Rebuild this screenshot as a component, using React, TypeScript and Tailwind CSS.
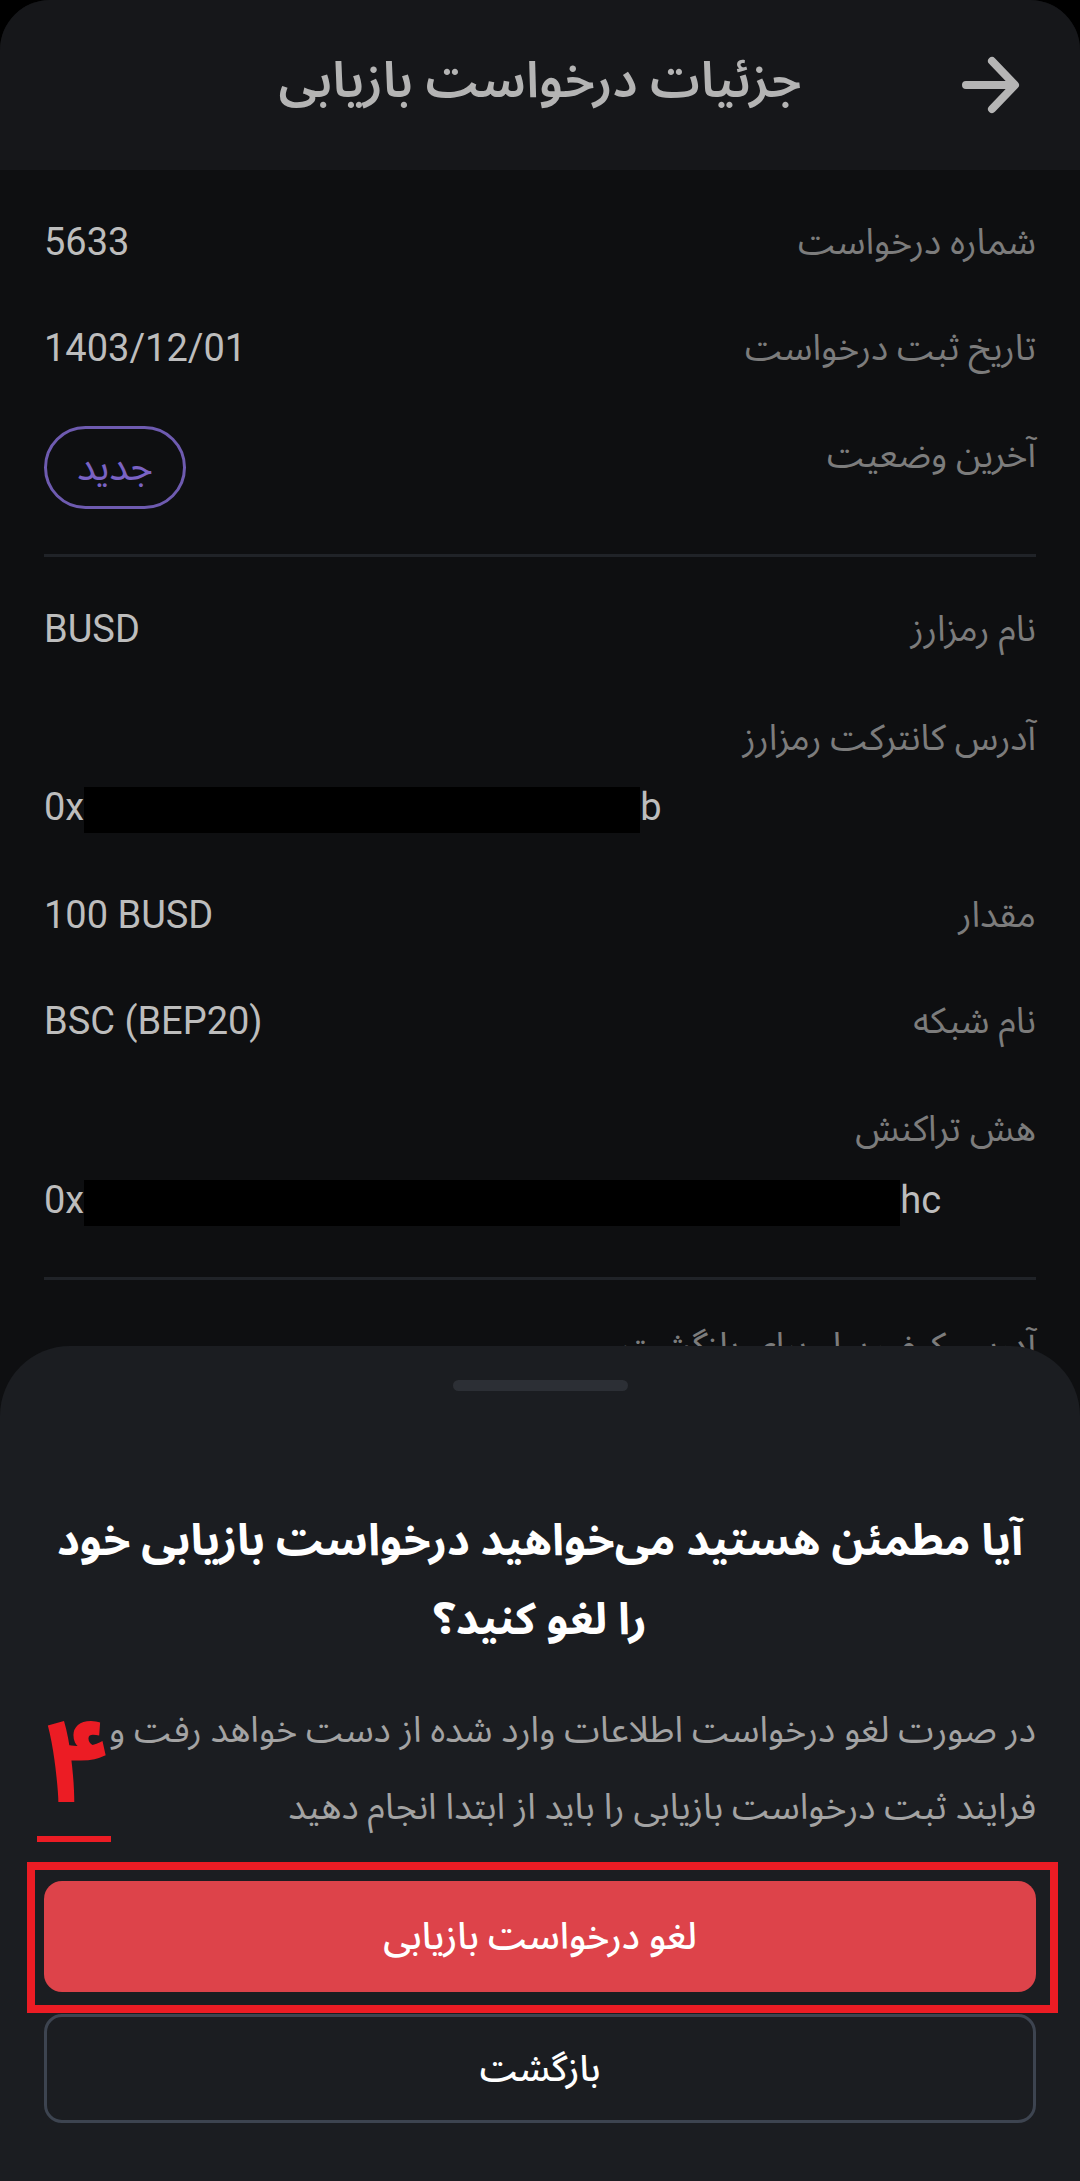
type Row = {
  label: string;
  value: string;
};

const font = "font-['Roboto','Noto_Sans_Arabic','DejaVu_Sans',sans-serif]";

function InfoRow({ label, value }: Row) {
  return (
    <div className="flex h-[50px] items-center justify-between">
      <span className="text-[36px] leading-[50px] text-[#7c7c7c]">{label}</span>
      <span dir="ltr" className="text-[38px] leading-[50px] text-[#bdbdbd]">
        {value}
      </span>
    </div>
  );
}

function HiddenValue({ width, tail }: { width: number; tail: string }) {
  return (
    <div dir="ltr" className="flex h-[50px] items-center text-[38px] leading-[50px] text-[#bdbdbd]">
      <span>0x</span>
      <span className="mt-[6px] h-[46px] bg-black" style={{ width }} />
      <span>{tail}</span>
    </div>
  );
}

function BackArrow() {
  return (
    <svg width="60" height="60" viewBox="0 0 60 60" fill="none">
      <path
        d="M6 30H54M32 6L55 30L32 54"
        stroke="#b5b5b5"
        strokeWidth="8"
        strokeLinecap="round"
        strokeLinejoin="round"
      />
    </svg>
  );
}

export default function App() {
  return (
    <div dir="rtl" className={`relative h-[2181px] w-[1080px] overflow-hidden bg-black ${font}`}>
      <div className="h-full rounded-t-[50px] bg-[#0e0f11]">
        {/* header */}
        <div className="grid h-[170px] grid-cols-[120px_1fr_120px] items-center rounded-t-[50px] bg-[#16171a]">
          <div className="flex justify-start pr-[60px]">
            <BackArrow />
          </div>
          <h1 className="mb-[10px] text-center text-[50px] font-semibold text-[#b4b4b4]">جزئیات درخواست بازیابی</h1>
          <div />
        </div>

        {/* details */}
        <div className="px-[44px] pt-[47px]">
          <InfoRow label="شماره درخواست" value="5633" />
          <div className="mt-[56px]">
            <InfoRow label="تاریخ ثبت درخواست" value="1403/12/01" />
          </div>
          <div className="mt-[53px] flex items-start justify-between">
            <span className="mt-[4px] text-[36px] leading-[50px] text-[#7c7c7c]">آخرین وضعیت</span>
            <span className="flex h-[83px] w-[142px] items-center justify-center rounded-full border-[3px] border-[#6e5bb0] text-[39px] text-[#7a63c4]">
              جدید
            </span>
          </div>

          <div className="mt-[45px] h-[3px] bg-[#202328]" />

          <div className="mt-[47px]">
            <InfoRow label="نام رمزارز" value="BUSD" />
          </div>
          <div className="mt-[59px] text-[36px] leading-[50px] text-[#7c7c7c]">آدرس کانترکت رمزارز</div>
          <div className="mt-[19px]">
            <HiddenValue width={556} tail="b" />
          </div>
          <div className="mt-[58px]">
            <InfoRow label="مقدار" value="100 BUSD" />
          </div>
          <div className="mt-[56px]">
            <InfoRow label="نام شبکه" value="BSC (BEP20)" />
          </div>
          <div className="mt-[58px] text-[36px] leading-[50px] text-[#7c7c7c]">هش تراکنش</div>
          <div className="mt-[21px]">
            <HiddenValue width={816} tail="hc" />
          </div>

          <div className="mt-[52px] h-[3px] bg-[#202328]" />

          <div className="mt-[41px] text-[36px] leading-[50px] text-[#7c7c7c]">آدرس کیف پول برای بازگشت</div>
        </div>
      </div>

      {/* bottom sheet */}
      <div className="absolute inset-x-0 bottom-0 h-[835px] rounded-t-[70px] bg-[#1b1d21] px-[44px]">
        <div className="mx-auto mt-[34px] h-[11px] w-[175px] rounded-full bg-[#2c2f35]" />

        <h2 className="mt-[110px] text-center text-[44px] font-bold leading-[79px] text-white">
          آیا مطمئن هستید می‌خواهید درخواست بازیابی خود
          <br />
          را لغو کنید؟
        </h2>

        <p className="mt-[33px] text-[36px] leading-[77px] text-[#a3a3a3]">
          در صورت لغو درخواست اطلاعات وارد شده از دست خواهد رفت و
          <br />
          فرایند ثبت درخواست بازیابی را باید از ابتدا انجام دهید
        </p>

        <button className="mt-[35px] flex h-[111px] w-full items-center justify-center rounded-[18px] bg-[#dd434a] text-[37px] font-medium text-white">
          لغو درخواست بازیابی
        </button>
        <button className="mt-[22px] flex h-[109px] w-full items-center justify-center rounded-[18px] border-[3px] border-[#3d4450] text-[36px] font-medium text-white">
          بازگشت
        </button>
      </div>

      {/* red annotation marks */}
      <div className="absolute left-[43px] top-[1702px] text-[118px] font-bold leading-none text-[#ec1c24]">۴</div>
      <div className="absolute left-[37px] top-[1836px] h-[6px] w-[74px] bg-[#ec1c24]" />
      <div className="absolute left-[27px] top-[1862px] h-[151px] w-[1031px] border-[8px] border-[#ec1c24]" />
    </div>
  );
}
